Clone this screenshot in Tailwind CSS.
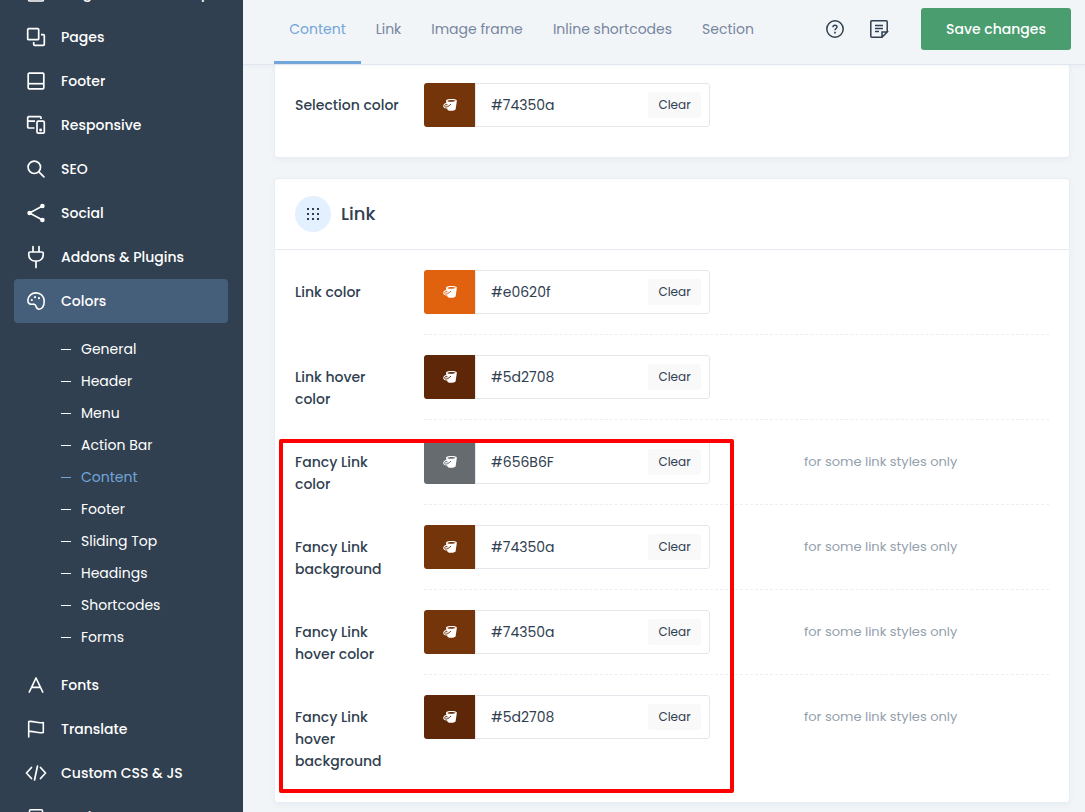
<!DOCTYPE html>
<html lang="en">
<head>
<meta charset="utf-8">
<title>Theme options</title>
<script src="https://cdn.jsdelivr.net/npm/@tailwindcss/browser@4"></script>
</head>
<body class="flex h-screen overflow-hidden bg-[#f1f5f8] font-['Poppins','Inter',sans-serif] text-sm text-[#304050]">

<svg class="hidden">
  <symbol id="bucket" viewBox="0 0 14 14">
    <path d="M3 2.400C4 .6 12.500.4 13.800 2.200L13.700 4 12.600 11.600C11 13.200 6 13.200 4.600 12L4.200 10.500C2 10.800.2 9.700.2 8 .2 6.400 1.600 5.200 3.300 4.700Z" fill="#fff"/>
    <path d="M4.300 2.900C6 1.700 11 1.700 12.700 2.800 11 4 6 4.200 4.300 2.900Z" fill="currentColor"/>
    <path d="M3.600 6.200C2 6.700 1.400 7.500 1.700 8.400 2.300 9.400 3.600 9.100 4.700 8.600 6.200 7.900 7.200 7 7.900 6M3.700 6 4 7.400" fill="none" stroke="currentColor" stroke-width="1"/>
  </symbol>
</svg>

<aside class="w-[243px] shrink-0 overflow-hidden bg-[#304050] text-white">
  <nav class="-mt-[29px] pl-[14px] pr-[15px] font-medium">
    <a href="#" class="flex h-11 items-center gap-[15px] whitespace-nowrap pl-3">
      <svg class="size-5" viewBox="0 0 20 20" fill="none" stroke="currentColor" stroke-width="1.500"><rect x="2.500" y="1.500" width="15" height="16.500" rx="1"/></svg>Blog, Portfolio &amp; Shop</a>
    <a href="#" class="flex h-11 items-center gap-[15px] pl-3">
      <svg class="size-5" viewBox="0 0 20 20" fill="none" stroke="currentColor" stroke-width="1.700"><rect x="1.700" y="1.700" width="11" height="11" rx="1"/><path d="M15 7.700h2.300a1 1 0 0 1 1 1v8.600a1 1 0 0 1-1 1H8.700a1 1 0 0 1-1-1V15"/></svg>Pages</a>
    <a href="#" class="flex h-11 items-center gap-[15px] pl-3">
      <svg class="size-5" viewBox="0 0 20 20" fill="none" stroke="currentColor" stroke-width="1.700"><rect x="2.200" y="2.200" width="15.600" height="15.600" rx="1"/><path d="M2.200 12.700h15.600"/></svg>Footer</a>
    <a href="#" class="flex h-11 items-center gap-[15px] pl-3">
      <svg class="size-5" viewBox="0 0 20 20" fill="none" stroke="currentColor" stroke-width="1.700"><path d="M8.500 13H2.700a1 1 0 0 1-1-1V2.700a1 1 0 0 1 1-1H14a1 1 0 0 1 1 1V4M1.700 6.200H9"/><rect x="11" y="6.200" width="7.300" height="12" rx="1.200"/><circle cx="14.600" cy="15" r=".6" fill="currentColor"/></svg>Responsive</a>
    <a href="#" class="flex h-11 items-center gap-[15px] pl-3">
      <svg class="size-5" viewBox="0 0 20 20" fill="none" stroke="currentColor" stroke-width="1.700" stroke-linecap="round"><circle cx="8.300" cy="8.300" r="6.200"/><path d="m12.900 12.900 5 5"/></svg>SEO</a>
    <a href="#" class="flex h-11 items-center gap-[15px] pl-3">
      <svg class="size-5" viewBox="0 0 20 20" fill="none" stroke="currentColor" stroke-width="1.600"><path d="M16.500 3 3.500 10l13 7"/><g fill="currentColor" stroke="none"><circle cx="16.400" cy="3" r="2.300"/><circle cx="3.600" cy="10" r="2.300"/><circle cx="16.400" cy="17" r="2.300"/></g></svg>Social</a>
    <a href="#" class="flex h-11 items-center gap-[15px] pl-3">
      <svg class="h-6 w-5" viewBox="0 0 20 24" fill="none" stroke="currentColor" stroke-width="1.700" stroke-linecap="round"><path d="M7 1.500V7m6-5.500V7M4 7h12a1.200 1.200 0 0 1 1.200 1.200V10a6 6 0 0 1-6 6H8.800a6 6 0 0 1-6-6V8.200A1.200 1.200 0 0 1 4 7Zm6 9v6.500"/></svg>Addons &amp; Plugins</a>
    <a href="#" class="flex h-11 items-center gap-[15px] rounded-sm bg-[#455e79] pl-3">
      <svg class="size-5" viewBox="0 0 20 20" fill="none" stroke="currentColor" stroke-width="1.600"><path d="M10 1.900c4.800 0 8.200 3.500 8.200 8.300 0 4.400-2 8-5 8-2.300 0-2.800-1.500-3.200-3-.5-2-1.500-2.300-3.500-2-2.700.3-4.700-1-4.700-3.600C1.800 5.200 5.500 1.900 10 1.900Z"/><g fill="currentColor" stroke="none"><circle cx="5.800" cy="9" r="1.100"/><circle cx="9" cy="6.200" r="1.100"/><circle cx="13" cy="7.200" r="1.100"/></g></svg>Colors</a>
    <ul class="py-[10px] pl-[47px] font-normal">
      <li><a href="#" class="flex h-8 items-center gap-[10px]"><span class="h-px w-[10px] bg-current"></span>General</a></li>
      <li><a href="#" class="flex h-8 items-center gap-[10px]"><span class="h-px w-[10px] bg-current"></span>Header</a></li>
      <li><a href="#" class="flex h-8 items-center gap-[10px]"><span class="h-px w-[10px] bg-current"></span>Menu</a></li>
      <li><a href="#" class="flex h-8 items-center gap-[10px]"><span class="h-px w-[10px] bg-current"></span>Action Bar</a></li>
      <li><a href="#" class="flex h-8 items-center gap-[10px] text-[#72a5d8]"><span class="h-px w-[10px] bg-current"></span>Content</a></li>
      <li><a href="#" class="flex h-8 items-center gap-[10px]"><span class="h-px w-[10px] bg-current"></span>Footer</a></li>
      <li><a href="#" class="flex h-8 items-center gap-[10px]"><span class="h-px w-[10px] bg-current"></span>Sliding Top</a></li>
      <li><a href="#" class="flex h-8 items-center gap-[10px]"><span class="h-px w-[10px] bg-current"></span>Headings</a></li>
      <li><a href="#" class="flex h-8 items-center gap-[10px]"><span class="h-px w-[10px] bg-current"></span>Shortcodes</a></li>
      <li><a href="#" class="flex h-8 items-center gap-[10px]"><span class="h-px w-[10px] bg-current"></span>Forms</a></li>
    </ul>
    <a href="#" class="flex h-11 items-center gap-[15px] pl-3">
      <svg class="size-5" viewBox="0 0 20 20" fill="none" stroke="currentColor" stroke-width="1.700" stroke-linecap="round" stroke-linejoin="round"><path d="M3.300 17 10 3l6.700 14M5.600 12.300h8.800"/></svg>Fonts</a>
    <a href="#" class="flex h-11 items-center gap-[15px] pl-3">
      <svg class="size-5" viewBox="0 0 20 20" fill="none" stroke="currentColor" stroke-width="1.600" stroke-linecap="round" stroke-linejoin="round"><path d="M2.700 18V2.500c5-1 9 2.500 14.600 1v10c-5.600 1.500-9.600-2-14.600-1"/></svg>Translate</a>
    <a href="#" class="flex h-11 items-center gap-[15px] pl-3">
      <svg class="size-5 overflow-visible" viewBox="0 0 20 20" fill="none" stroke="currentColor" stroke-width="1.700" stroke-linecap="round" stroke-linejoin="round"><path d="M5.500 4.500.5 10l5 5.500m9-11 5 5.500-5 5.500M11.500 3l-3 14"/></svg>Custom CSS &amp; JS</a>
    <a href="#" class="flex h-11 items-center gap-[15px] pl-3">
      <svg class="size-5" viewBox="0 0 20 20" fill="none" stroke="currentColor" stroke-width="1.500"><rect x="3.500" y="2.700" width="13" height="15" rx="1"/></svg>Backup</a>
  </nav>
</aside>

<div class="flex min-w-0 flex-1 flex-col">
  <header class="relative z-10 flex h-[65px] shrink-0 items-start border-b border-[#e1e6f0] bg-[#f1f5f8] pl-[31px] pr-[14px] shadow-[0_2px_4px_rgba(40,60,100,0.03)]">
    <nav class="flex h-16 text-center text-[#78859f]">
      <a href="#" class="flex w-[87px] justify-center rounded-t-xs border-b-3 border-[#72a5d8] pt-[19px] text-[#72a5d8]">Content</a>
      <a href="#" class="w-[55px] pt-[19px]">Link</a>
      <a href="#" class="w-[122px] pt-[19px]">Image frame</a>
      <a href="#" class="w-[149px] pt-[19px]">Inline shortcodes</a>
      <a href="#" class="w-[82px] pt-[19px]">Section</a>
    </nav>
    <div class="ml-auto flex items-center gap-6 pt-2">
      <button type="button" aria-label="Help"><svg class="size-5" viewBox="0 0 20 20" fill="none" stroke="#304050" stroke-width="1.500"><circle cx="10" cy="10" r="8.200"/><path d="M8 8.300c0-2.700 4-2.700 4-.3 0 1.500-2 1.500-2 3.200"/><path d="M10 12.800v1.600" stroke-width="1.700"/></svg></button>
      <button type="button" aria-label="Notes"><svg class="size-5" viewBox="0 0 20 20" fill="none" stroke="#304050" stroke-width="1.500"><path d="M18.200 13V2.800a1 1 0 0 0-1-1H2.800a1 1 0 0 0-1 1v14.400a1 1 0 0 0 1 1H13L18.200 13H13v5.200M6 6.500h8M6 9.500h8M6 12.500h4"/></svg></button>
      <button type="button" class="ml-2 h-[42px] w-[150px] rounded-[3px] bg-[#4a9d6f] font-medium text-white">Save changes</button>
    </div>
  </header>

  <main class="flex flex-col gap-[22px] pl-8 pr-4">
    <section class="-mt-[2px] rounded-[3px] bg-white px-5 pb-[10px] shadow-[0_0_0_1px_#e9edf5,0_2px_6px_rgba(40,60,100,0.06)]">
      <div class="flex">
        <label for="c0" class="w-[129px] shrink-0 whitespace-nowrap pt-[31px] font-medium leading-[22px]">Selection color</label>
        <div class="flex flex-1 py-5">
          <div class="flex h-11 w-[286px] overflow-hidden rounded-[3px]">
            <button type="button" aria-label="Pick color" class="flex w-[51px] shrink-0 items-center justify-center bg-[#74350a] text-[#74350a]"><svg class="size-[14px]"><use href="#bucket"/></svg></button>
            <div class="flex min-w-0 flex-1 items-center rounded-r-[3px] border border-[#e3e6ea] pr-2">
              <input id="c0" value="#74350a" class="min-w-0 flex-1 pl-[15px] outline-none">
              <button type="button" class="h-[26px] w-[53px] shrink-0 rounded-[3px] bg-[#f9f9f9] text-xs">Clear</button>
            </div>
          </div>
        </div>
      </div>
    </section>

    <section class="rounded-[3px] bg-white pb-[10px] shadow-[0_0_0_1px_#e9edf5,0_2px_6px_rgba(40,60,100,0.06)]">
      <div class="flex h-[71px] items-center gap-[10px] border-b border-[#e9ebf2] px-5">
        <span class="flex size-9 items-center justify-center rounded-full bg-[#e2f0ff]">
          <svg class="size-3" viewBox="0 0 12 12" fill="#304050"><path d="M0 0h2v2H0zM5 0h2v2H5zM10 0h2v2h-2zM0 5h2v2H0zM5 5h2v2H5zM10 5h2v2h-2zM0 10h2v2H0zM5 10h2v2H5zM10 10h2v2h-2z"/></svg>
        </span>
        <h2 class="text-lg font-medium">Link</h2>
      </div>
      <div class="relative px-5">
        <div class="flex">
          <label for="c1" class="w-[129px] shrink-0 whitespace-nowrap pt-[31px] font-medium leading-[22px]">Link color</label>
          <div class="flex flex-1 border-b border-dashed border-[#eceef1] py-5">
            <div class="flex h-11 w-[286px] overflow-hidden rounded-[3px]">
              <button type="button" aria-label="Pick color" class="flex w-[51px] shrink-0 items-center justify-center bg-[#e0620f] text-[#e0620f]"><svg class="size-[14px]"><use href="#bucket"/></svg></button>
              <div class="flex min-w-0 flex-1 items-center rounded-r-[3px] border border-[#e3e6ea] pr-2">
                <input id="c1" value="#e0620f" class="min-w-0 flex-1 pl-[15px] outline-none">
                <button type="button" class="h-[26px] w-[53px] shrink-0 rounded-[3px] bg-[#f9f9f9] text-xs">Clear</button>
              </div>
            </div>
          </div>
        </div>
        <div class="flex">
          <label for="c2" class="w-[129px] shrink-0 whitespace-nowrap pt-[31px] font-medium leading-[22px]">Link hover<br>color</label>
          <div class="flex flex-1 border-b border-dashed border-[#eceef1] py-5">
            <div class="flex h-11 w-[286px] overflow-hidden rounded-[3px]">
              <button type="button" aria-label="Pick color" class="flex w-[51px] shrink-0 items-center justify-center bg-[#5d2708] text-[#5d2708]"><svg class="size-[14px]"><use href="#bucket"/></svg></button>
              <div class="flex min-w-0 flex-1 items-center rounded-r-[3px] border border-[#e3e6ea] pr-2">
                <input id="c2" value="#5d2708" class="min-w-0 flex-1 pl-[15px] outline-none">
                <button type="button" class="h-[26px] w-[53px] shrink-0 rounded-[3px] bg-[#f9f9f9] text-xs">Clear</button>
              </div>
            </div>
          </div>
        </div>
        <div class="flex">
          <label for="c3" class="w-[129px] shrink-0 whitespace-nowrap pt-[31px] font-medium leading-[22px]">Fancy Link<br>color</label>
          <div class="flex flex-1 items-center gap-[94px] border-b border-dashed border-[#eceef1] py-5">
            <div class="flex h-11 w-[286px] overflow-hidden rounded-[3px]">
              <button type="button" aria-label="Pick color" class="flex w-[51px] shrink-0 items-center justify-center bg-[#656b6f] text-[#656b6f]"><svg class="size-[14px]"><use href="#bucket"/></svg></button>
              <div class="flex min-w-0 flex-1 items-center rounded-r-[3px] border border-[#e3e6ea] pr-2">
                <input id="c3" value="#656B6F" class="min-w-0 flex-1 pl-[15px] outline-none">
                <button type="button" class="h-[26px] w-[53px] shrink-0 rounded-[3px] bg-[#f9f9f9] text-xs">Clear</button>
              </div>
            </div>
            <p class="text-[13px] text-[#93a0ad]">for some link styles only</p>
          </div>
        </div>
        <div class="flex">
          <label for="c4" class="w-[129px] shrink-0 whitespace-nowrap pt-[31px] font-medium leading-[22px]">Fancy Link<br>background</label>
          <div class="flex flex-1 items-center gap-[94px] border-b border-dashed border-[#eceef1] py-5">
            <div class="flex h-11 w-[286px] overflow-hidden rounded-[3px]">
              <button type="button" aria-label="Pick color" class="flex w-[51px] shrink-0 items-center justify-center bg-[#74350a] text-[#74350a]"><svg class="size-[14px]"><use href="#bucket"/></svg></button>
              <div class="flex min-w-0 flex-1 items-center rounded-r-[3px] border border-[#e3e6ea] pr-2">
                <input id="c4" value="#74350a" class="min-w-0 flex-1 pl-[15px] outline-none">
                <button type="button" class="h-[26px] w-[53px] shrink-0 rounded-[3px] bg-[#f9f9f9] text-xs">Clear</button>
              </div>
            </div>
            <p class="text-[13px] text-[#93a0ad]">for some link styles only</p>
          </div>
        </div>
        <div class="flex">
          <label for="c5" class="w-[129px] shrink-0 whitespace-nowrap pt-[31px] font-medium leading-[22px]">Fancy Link<br>hover color</label>
          <div class="flex flex-1 items-center gap-[94px] border-b border-dashed border-[#eceef1] py-5">
            <div class="flex h-11 w-[286px] overflow-hidden rounded-[3px]">
              <button type="button" aria-label="Pick color" class="flex w-[51px] shrink-0 items-center justify-center bg-[#74350a] text-[#74350a]"><svg class="size-[14px]"><use href="#bucket"/></svg></button>
              <div class="flex min-w-0 flex-1 items-center rounded-r-[3px] border border-[#e3e6ea] pr-2">
                <input id="c5" value="#74350a" class="min-w-0 flex-1 pl-[15px] outline-none">
                <button type="button" class="h-[26px] w-[53px] shrink-0 rounded-[3px] bg-[#f9f9f9] text-xs">Clear</button>
              </div>
            </div>
            <p class="text-[13px] text-[#93a0ad]">for some link styles only</p>
          </div>
        </div>
        <div class="flex items-start">
          <label for="c6" class="w-[129px] shrink-0 whitespace-nowrap pb-5 pt-[31px] font-medium leading-[22px]">Fancy Link<br>hover<br>background</label>
          <div class="flex flex-1 items-center gap-[94px] py-5">
            <div class="flex h-11 w-[286px] overflow-hidden rounded-[3px]">
              <button type="button" aria-label="Pick color" class="flex w-[51px] shrink-0 items-center justify-center bg-[#5d2708] text-[#5d2708]"><svg class="size-[14px]"><use href="#bucket"/></svg></button>
              <div class="flex min-w-0 flex-1 items-center rounded-r-[3px] border border-[#e3e6ea] pr-2">
                <input id="c6" value="#5d2708" class="min-w-0 flex-1 pl-[15px] outline-none">
                <button type="button" class="h-[26px] w-[53px] shrink-0 rounded-[3px] bg-[#f9f9f9] text-xs">Clear</button>
              </div>
            </div>
            <p class="text-[13px] text-[#93a0ad]">for some link styles only</p>
          </div>
        </div>
        <!-- Highlight around the fancy link options -->
        <div class="pointer-events-none absolute -bottom-px left-1 top-[189px] w-[455px] rounded-xs border-4 border-[#ff0000]"></div>
      </div>
    </section>
  </main>
</div>
</body>
</html>
